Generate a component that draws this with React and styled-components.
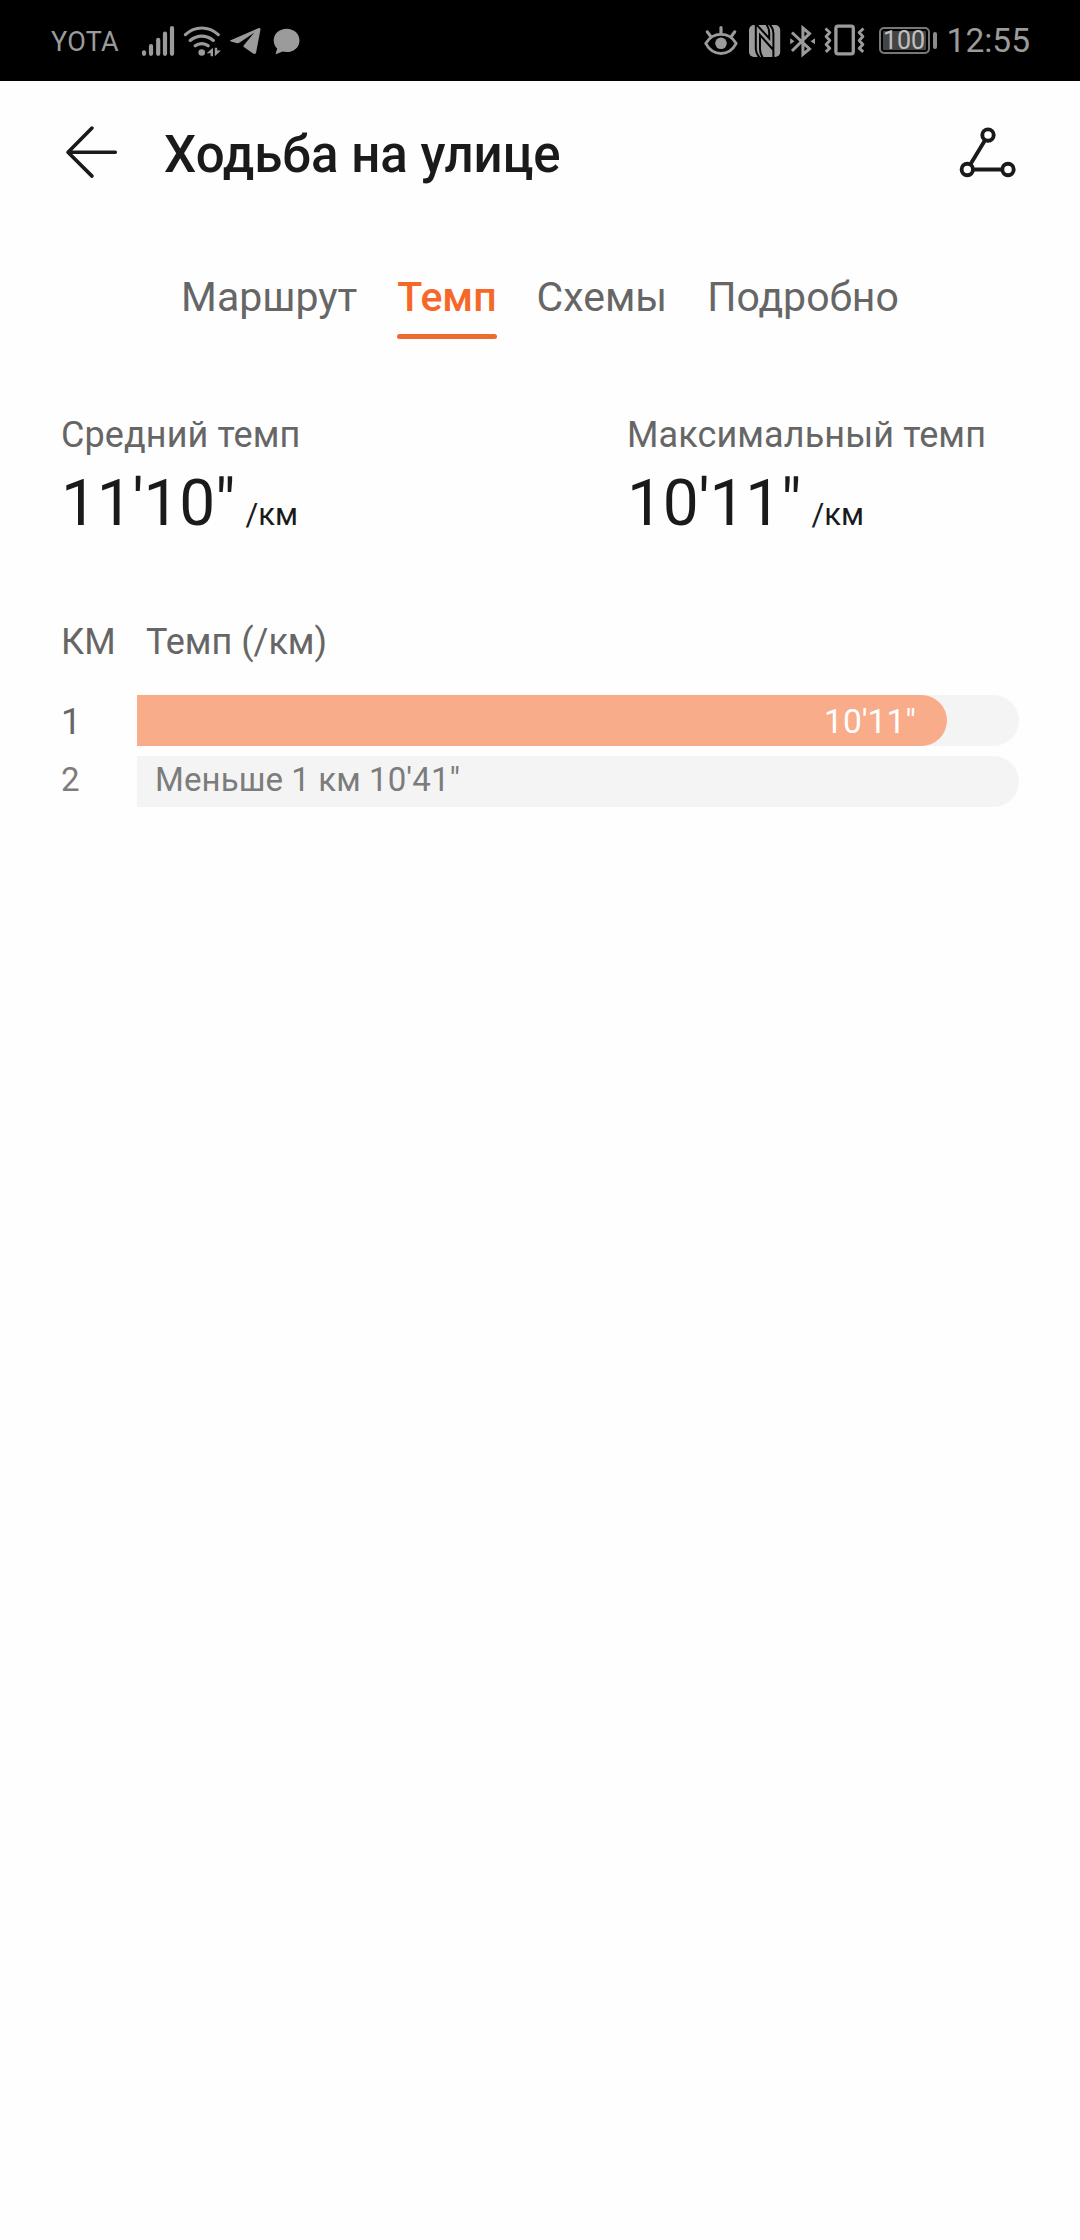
import styled, { createGlobalStyle } from 'styled-components';

const tabs = ['Маршрут', 'Темп', 'Схемы', 'Подробно'];

const stats = [
    {label: 'Средний темп', value: `11'10"`},
    {label: 'Максимальный темп', value: `10'11"`},
];

const splits = [
    {km: 1, pace: `10'11"`, width: 810},
    {km: 2, pace: `Меньше 1 км 10'41"`, partial: true},
];

function App() {
    return (
        <PageStyled>
            <GlobalStyle />
            <StatusBar />
            <HeaderStyled>
                <BackIcon />
                <h1>Ходьба на улице</h1>
                <RouteIcon />
            </HeaderStyled>
            <TabsStyled>
                {tabs.map((tab) => (
                    <TabStyled key={tab} $active={tab === 'Темп'}>{tab}</TabStyled>
                ))}
            </TabsStyled>
            <StatsStyled>
                {stats.map(({label, value}) => (
                    <div key={label}>
                        <p className="label">{label}</p>
                        <p className="value">{value}<span className="unit">/км</span></p>
                    </div>
                ))}
            </StatsStyled>
            <TableHeadStyled>
                <span className="km">КМ</span>
                <span>Темп (/км)</span>
            </TableHeadStyled>
            <SplitsStyled>
                {splits.map(({km, pace, width, partial}) => (
                    <SplitStyled key={km} $partial={partial}>
                        <span className="km">{km}</span>
                        <TrackStyled>
                            {partial
                                ? <span className="note">{pace}</span>
                                : <BarStyled style={{width}}><span>{pace}</span></BarStyled>}
                        </TrackStyled>
                    </SplitStyled>
                ))}
            </SplitsStyled>
        </PageStyled>
    )
}

function StatusBar() {
    return (
        <StatusBarStyled>
            <div className="side">
                <span className="carrier">YOTA</span>
                <SignalIcon />
                <WifiIcon />
                <TelegramIcon />
                <BubbleIcon />
            </div>
            <div className="side">
                <EyeIcon />
                <NfcIcon />
                <BluetoothIcon />
                <VibrateIcon />
                <BatteryStyled><span>100</span></BatteryStyled>
                <span className="clock">12:55</span>
            </div>
        </StatusBarStyled>
    )
}

function SignalIcon() {
    return (
        <IconStyled $gap={20} width="36" height="34" viewBox="140 23 36 34" stroke="#9b9b9b" strokeWidth="4.2" strokeLinecap="round">
            <path d="M144 51.3v1.5M151 45v7.8M158.2 38.8v14M165 32.7v20.1M172 27v25.8" />
        </IconStyled>
    )
}

function WifiIcon() {
    return (
        <IconStyled $gap={7} width="38" height="34" viewBox="183 23 38 34">
            <g fill="none" stroke="#9b9b9b" strokeWidth="3.2" strokeLinecap="round">
                <path d="M185.4 33.6Q192.5 27 201.8 27T218.3 33.6" />
                <path d="M190.2 39.4Q195.5 35.2 201.8 35.2T213.3 39.4" />
                <path d="M195.2 44.8Q198 42.6 201.8 42.6T208.2 44.8" />
            </g>
            <circle cx="201.7" cy="51.5" r="3.3" fill="#9b9b9b" />
            <path fill="#9b9b9b" d="M213 46.8v8.4h-2.4v-3h-4zM214.8 55.2v-8.4h2.4v2.600h4z" />
        </IconStyled>
    )
}

function TelegramIcon() {
    return (
        <IconStyled $gap={8} width="32" height="30" viewBox="229 27 32 30" fill="#9b9b9b">
            <path d="M230.6 41.2 258.2 29.2q2.6-.9 2.2 1.7l-4.3 22.5q-.8 2.6-3 1.2l-9.3-6.7q-.8-.8 0-1.7L254.2 33.8l-14.5 9.8q-1.6 1-3.3.5l-5.6-1.7q-1.4-.6-.2-1.2z" />
        </IconStyled>
    )
}

function BubbleIcon() {
    return (
        <IconStyled $gap={12} width="27" height="28" viewBox="273 27 27 28" fill="#9b9b9b">
            <path d="M286.6 28.7c7.3 0 12.9 5 12.9 11.7s-5.6 11.7-12.9 11.7c-1.5 0-2.7-.2-4-.5l-6 2.500q-1.3.4-.8-.9l1.4-4.7c-2.200-2-3.500-5-3.500-8.100 0-6.700 5.600-11.700 12.900-11.700z" />
        </IconStyled>
    )
}

function EyeIcon() {
    return (
        <IconStyled width="34" height="32" viewBox="704.5 24.5 34 32" fill="none" stroke="#9b9b9b" strokeWidth="2.9" strokeLinecap="round">
            <path d="M706.2 42.9C710 36.5 715.5 33.9 721.5 33.9S733 36.5 736.7 42.9C733 49.9 727.5 53 721.5 53S710 49.9 706.2 42.9z" strokeLinejoin="round" />
            <path d="M707.8 31.4l3 4M721.5 27v5.8M735.2 31.4l-3 4" strokeWidth="3.2" />
            <circle cx="721.5" cy="42.8" r="5.8" fill="#9b9b9b" stroke="none" />
        </IconStyled>
    )
}

function NfcIcon() {
    return (
        <IconStyled $gap={11} width="32" height="32" viewBox="0 0 32 32">
            <rect width="31.2" height="32" rx="5" fill="#9b9b9b" />
            <path fill="none" stroke="#000" strokeWidth="2" d="M6.8 0v24q.2 5 3.7 8.5M7.5-.5 20.200 13.500V8q-.1-5-2.700-8.500M24.400 24V8q-.2-5-3.700-8.500M13.700 32.500Q11 29 11 24V10L24.400 25v7" />
        </IconStyled>
    )
}

function BluetoothIcon() {
    return (
        <IconStyled $gap={9} width="26" height="34" viewBox="790 23 26 34">
            <path fill="none" stroke="#9b9b9b" strokeWidth="3" d="M792 31.5 809.5 48 802.9 53.4V27L809.5 32.5 792 50" />
            <path fill="#9b9b9b" d="M790.2 37.2l4.3 3-4.3 3zM815 37.2l-4.5 3 4.5 3z" />
        </IconStyled>
    )
}

function VibrateIcon() {
    return (
        <IconStyled $gap={8} width="41" height="33" viewBox="824 24 41 33" fill="none" stroke="#9b9b9b" strokeWidth="3.3">
            <rect x="835.9" y="26.2" width="17.4" height="27.6" rx="2" />
            <path strokeWidth="2.9" strokeLinejoin="round" d="M825.5 28.5l4.3 4-3.7 4 3.7 4-3.7 4 3.7 3.7-4 3.6M863.5 28.5l-4.3 4 3.7 4-3.7 4 3.7 4-3.7 3.7 4 3.6" />
        </IconStyled>
    )
}

function BackIcon() {
    return (
        <svg width="54" height="54" viewBox="65 124.5 54 54" fill="none" stroke="#1a1a1a" strokeWidth="3.6" strokeLinecap="round" strokeLinejoin="round">
            <path d="M92 127.6 68 151.7 92 175.6M68 151.7h47.3" />
        </svg>
    )
}

function RouteIcon() {
    return (
        <svg width="58" height="52" viewBox="959 125.5 58 52" fill="none" stroke="#1a1a1a" strokeWidth="3.9">
            <circle cx="988" cy="134.6" r="5.7" />
            <circle cx="967.3" cy="169" r="5.7" />
            <circle cx="1008" cy="169" r="5.7" />
            <path d="M985 139.7 970.3 164M973 169h29.2" />
        </svg>
    )
}

const GlobalStyle = createGlobalStyle`
    *{
        margin: 0;
        padding: 0;
        box-sizing: border-box;
    }

    body{
        background: #fefefe;
        font-family: Roboto, 'Liberation Sans', sans-serif;
    }
`;

const PageStyled = styled.div`
    width: 1080px;
    min-height: 2240px;
    background: #fefefe;
    color: #1a1a1a;
`;

const StatusBarStyled = styled.div`
    height: 81px;
    padding: 0 50px 0 51px;
    display: flex;
    justify-content: space-between;
    background: #000;
    color: #9b9b9b;

    .side{
        display: flex;
        align-items: center;
    }

    .carrier{
        font-size: 27px;
        letter-spacing: .3px;
        padding-top: 3px;
        width: 69px;
    }

    .clock{
        font-size: 33.5px;
        line-height: 40px;
        padding-top: 1px;
        margin-left: 10px;
    }
`;

const IconStyled = styled.svg`
    flex: none;
    margin-left: ${({$gap = 0}) => $gap}px;
`;

const BatteryStyled = styled.div`
    display: flex;
    align-items: center;
    margin-left: 14px;

    span{
        width: 51px;
        height: 27px;
        border: 2px solid #777;
        border-radius: 5px;
        background: #444;
        box-shadow: inset 0 0 0 2px #000;
        color: #c0c0c0;
        font-size: 25px;
        line-height: 23px;
        text-align: center;
    }

    &::after{
        content: '';
        width: 4px;
        height: 17px;
        margin-left: 3px;
        border-radius: 2px;
        background: #8b8b8b;
    }
`;

const HeaderStyled = styled.header`
    height: 141px;
    padding: 0 63px 0 65px;
    display: flex;
    align-items: center;

    h1{
        flex: 1;
        padding: 6px 0 0 45px;
        font-size: 51px;
        font-weight: 500;
        line-height: 60px;
    }
`;

const TabsStyled = styled.nav`
    display: flex;
    justify-content: center;
    gap: 40px;
    padding-top: 50px;
`;

const TabStyled = styled.div`
    color: ${({$active}) => $active ? '#f6682a' : '#666'};
    font-size: 41px;
    font-weight: ${({$active}) => $active ? 500 : 400};
    line-height: 50px;

    &::after{
        content: '';
        display: block;
        height: 5px;
        margin-top: 12px;
        border-radius: 3px;
        background: ${({$active}) => $active ? '#ec6b2e' : 'transparent'};
    }
`;

const StatsStyled = styled.section`
    display: grid;
    grid-template-columns: 566px 1fr;
    padding: 75px 0 0 61px;

    .label{
        color: #666;
        font-size: 36px;
        letter-spacing: .1px;
        line-height: 42px;
    }

    .value{
        margin-top: 10px;
        font-size: 64px;
        letter-spacing: -.2px;
        line-height: 76px;
    }

    .unit{
        margin-left: 10px;
        font-size: 31px;
        letter-spacing: 0;
        line-height: 1;
    }
`;

const TableHeadStyled = styled.div`
    display: flex;
    padding: 79px 0 0 61px;
    color: #666;
    font-size: 36px;
    line-height: 42px;

    .km{
        width: 85px;
    }
`;

const SplitsStyled = styled.section`
    display: flex;
    flex-direction: column;
    gap: 10px;
    padding: 32px 61px 0;
`;

const SplitStyled = styled.div`
    display: flex;
    height: 51px;
    color: ${({$partial}) => $partial ? '#7c7c7c' : '#666'};
    font-size: ${({$partial}) => $partial ? 33 : 36}px;
    line-height: ${({$partial}) => $partial ? 47 : 54}px;

    .km{
        width: 76px;
    }
`;

const TrackStyled = styled.div`
    flex: 1;
    border-radius: 0 26px 26px 0;
    background: #f4f4f4;

    .note{
        padding-left: 18px;
        letter-spacing: .1px;
    }
`;

const BarStyled = styled.div`
    height: 51px;
    padding-right: 31px;
    border-radius: 0 26px 26px 0;
    background: #f8ac8a;
    color: #fff;
    font-size: 33.5px;
    line-height: 54px;
    text-align: right;
`;

export default App
